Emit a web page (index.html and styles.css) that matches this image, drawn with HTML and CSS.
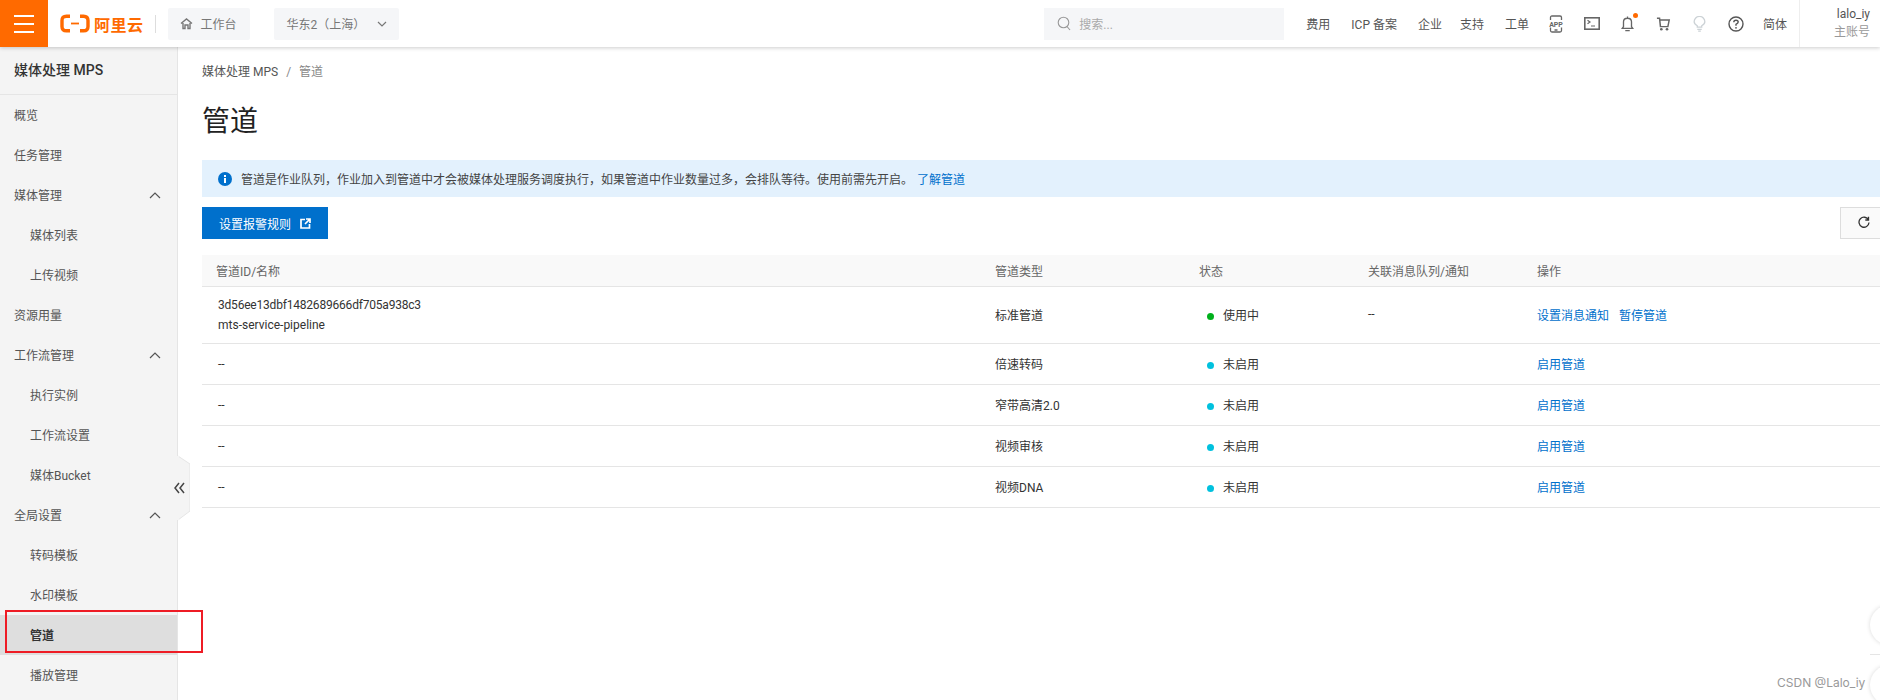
FILE: index.html
```html
<!DOCTYPE html>
<html lang="zh-CN">
<head>
<meta charset="utf-8">
<title>管道 - 媒体处理 MPS</title>
<link rel="stylesheet" href="styles.css">
</head>
<body>

<header class="topbar">
    <div class="burger"><span></span><span></span><span></span></div>
    <div class="logo">
        <svg width="30" height="19" viewBox="0 0 30 19"><path d="M10 2.200H6.500Q2 2.200 2 6.500V12.500Q2 16.800 6.500 16.800H10M20 2.200H23.500Q28 2.200 28 6.500V12.500Q28 16.800 23.500 16.800H20" fill="none" stroke="#ff6a00" stroke-width="3.400"/><path d="M11 9.500H19" stroke="#ff6a00" stroke-width="1.800"/></svg>
        <span class="logoText">阿里云</span>
    </div>
    <div class="logoSep"></div>
    <div class="greyBtn workBtn">
        <svg width="13" height="13" viewBox="0 0 13 13"><path d="M1 6.500L6.500 2L12 6.500M3 6V11.500H5V8H8V11.500H10V6" fill="none" stroke="#777" stroke-width="1.400"/></svg>
        工作台
    </div>
    <div class="greyBtn regionBtn">
        华东2（上海）
        <svg width="10" height="6" viewBox="0 0 10 6"><path d="M1 1L5 5L9 1" fill="none" stroke="#777" stroke-width="1.200"/></svg>
    </div>
    <div class="spacer"></div>
    <div class="search">
        <svg width="14" height="15" viewBox="0 0 14 15"><circle cx="6.500" cy="6.500" r="5.300" fill="none" stroke="#999" stroke-width="1.100"/><path d="M10 10.500L13 14" stroke="#999" stroke-width="1.100"/></svg>
        搜索...
    </div>
    <nav class="topnav">
        <a class="navText wide">费用</a>
        <a class="navText wide">ICP 备案</a>
        <a class="navText">企业</a>
        <a class="navText wide">支持</a>
        <a class="navText">工单</a>
        <a class="navIcon">
            <svg width="18" height="18" viewBox="0 0 18 18"><path d="M3.500 5V2.500Q3.500 1 5 1H13Q14.500 1 14.500 2.500V5M3.500 12.500V15.500Q3.500 17 5 17H13Q14.500 17 14.500 15.500V12.500M7.500 15H10.500" fill="none" stroke="#666" stroke-width="1.300"/><text x="9" y="11.500" class="appText">APP</text></svg>
        </a>
        <a class="navIcon">
            <svg width="16" height="13" viewBox="0 0 16 13"><rect x="0.800" y="0.800" width="14.400" height="11.400" fill="none" stroke="#666" stroke-width="1.600"/><path d="M3.500 3.200L6 5L3.500 6.800M7 9H11" fill="none" stroke="#666" stroke-width="1.200"/></svg>
        </a>
        <a class="navIcon bell">
            <svg width="13" height="16" viewBox="0 0 14 18"><path d="M1 14H13L11.500 12V6.500Q11.500 2.500 7 2.500Q2.500 2.500 2.500 6.500V12ZM7 0.500V2.500M4.500 16.500H9.500" fill="none" stroke="#666" stroke-width="1.500"/></svg>
            <span class="bellDot"></span>
        </a>
        <a class="navIcon">
            <svg width="15" height="14" viewBox="0 0 16 16"><path d="M0.500 1.500H3.500L4.500 11H13L14.500 3.500H4" fill="none" stroke="#666" stroke-width="1.700"/><circle cx="5.500" cy="14" r="1.500" fill="#666"/><circle cx="12" cy="14" r="1.500" fill="#666"/></svg>
        </a>
        <a class="navIcon">
            <svg width="13" height="16" viewBox="0 0 14 18"><path d="M4.500 12.500V11Q1 9 1 6.500A6 6 0 0 1 13 6.500Q13 9 9.500 11V12.500Z" fill="none" stroke="#ccd2d6" stroke-width="1.500"/><path d="M4.500 15H9.500M5.500 17H8.500" stroke="#ccd2d6" stroke-width="1.300"/></svg>
        </a>
        <a class="navIcon">
            <svg width="16" height="16" viewBox="0 0 16 16"><circle cx="8" cy="8" r="7" fill="none" stroke="#555" stroke-width="1.400"/><path d="M5.800 6.200Q5.800 4.200 8 4.200Q10.200 4.200 10.200 6Q10.200 7.200 8 8.300V9.800" fill="none" stroke="#555" stroke-width="1.400"/><circle cx="8" cy="11.800" r="0.900" fill="#555"/></svg>
        </a>
        <a class="navText">简体</a>
    </nav>
    <div class="account">
        <div class="accName">lalo_iy</div>
        <div class="accRole">主账号</div>
    </div>
</header>

<div class="layout">
    <aside class="sidebar">
        <div class="sideTitle">媒体处理 MPS</div>
        <ul class="menu">
            <li class="menuItem">概览</li>
            <li class="menuItem">任务管理</li>
            <li class="menuItem">媒体管理<svg class="caret" width="12" height="7" viewBox="0 0 12 7"><path d="M1 6L6 1L11 6" fill="none" stroke="#555" stroke-width="1.200"/></svg></li>
            <li class="menuItem sub">媒体列表</li>
            <li class="menuItem sub">上传视频</li>
            <li class="menuItem">资源用量</li>
            <li class="menuItem">工作流管理<svg class="caret" width="12" height="7" viewBox="0 0 12 7"><path d="M1 6L6 1L11 6" fill="none" stroke="#555" stroke-width="1.200"/></svg></li>
            <li class="menuItem sub">执行实例</li>
            <li class="menuItem sub">工作流设置</li>
            <li class="menuItem sub">媒体Bucket</li>
            <li class="menuItem">全局设置<svg class="caret" width="12" height="7" viewBox="0 0 12 7"><path d="M1 6L6 1L11 6" fill="none" stroke="#555" stroke-width="1.200"/></svg></li>
            <li class="menuItem sub">转码模板</li>
            <li class="menuItem sub">水印模板</li>
            <li class="menuItem sub active">管道</li>
            <li class="menuItem sub">播放管理</li>
        </ul>
    </aside>

    <svg class="collapseTab" width="24" height="66" viewBox="0 0 24 66">
        <path d="M12 1L24 9V56L12 65" fill="#f4f4f4" stroke="#e5e5e5"/>
        <path d="M12 1V65" stroke="#f4f4f4" stroke-width="2"/>
        <path d="M13 28L9 33L13 38M18 28L14 33L18 38" fill="none" stroke="#444" stroke-width="1.500"/>
    </svg>

    <main class="content">
        <div class="crumbs">媒体处理 MPS<span class="crumbSep">/</span><span class="crumbNow">管道</span></div>
        <h1 class="pageTitle">管道</h1>

        <div class="notice">
            <svg width="14" height="14" viewBox="0 0 14 14"><circle cx="7" cy="7" r="7" fill="#0070cc"/><rect x="6" y="6" width="2" height="5" fill="#fff"/><rect x="6" y="3" width="2" height="2" fill="#fff"/></svg>
            <span>管道是作业队列，作业加入到管道中才会被媒体处理服务调度执行，如果管道中作业数量过多，会排队等待。使用前需先开启。</span>
            <a class="link noticeLink">了解管道</a>
        </div>

        <div class="toolbar">
            <button class="primaryBtn">设置报警规则
                <svg width="11" height="11" viewBox="0 0 11 11"><path d="M5 1.500H1V10H9.500V6M6 1H10V5M10 1L5 6" fill="none" stroke="#fff" stroke-width="1.700"/></svg>
            </button>
            <button class="refreshBtn">
                <svg width="12" height="12" viewBox="0 0 12 12"><path d="M10.500 4A5 5 0 1 0 11 6.500M10.500 0.800V4H7.300" fill="none" stroke="#333" stroke-width="1.300"/></svg>
            </button>
        </div>

        <table class="pipes">
            <colgroup><col class="colName"><col class="colType"><col class="colState"><col class="colQueue"><col class="colOps"></colgroup>
            <thead>
                <tr><th>管道ID/名称</th><th>管道类型</th><th>状态</th><th>关联消息队列/通知</th><th>操作</th></tr>
            </thead>
            <tbody>
                <tr class="tall">
                    <td><div class="pipeId">3d56ee13dbf1482689666df705a938c3</div><div>mts-service-pipeline</div></td>
                    <td>标准管道</td>
                    <td><span class="dot green"></span>使用中</td>
                    <td>--</td>
                    <td><a class="link opLink">设置消息通知</a><a class="link">暂停管道</a></td>
                </tr>
                <tr><td>--</td><td>倍速转码</td><td><span class="dot cyan"></span>未启用</td><td></td><td><a class="link">启用管道</a></td></tr>
                <tr><td>--</td><td>窄带高清2.0</td><td><span class="dot cyan"></span>未启用</td><td></td><td><a class="link">启用管道</a></td></tr>
                <tr><td>--</td><td>视频审核</td><td><span class="dot cyan"></span>未启用</td><td></td><td><a class="link">启用管道</a></td></tr>
                <tr><td>--</td><td>视频DNA</td><td><span class="dot cyan"></span>未启用</td><td></td><td><a class="link">启用管道</a></td></tr>
            </tbody>
        </table>
    </main>
</div>

<div class="redMark"></div>
<div class="floatBall ballTop"></div>
<div class="floatLine"></div>
<div class="floatBall ballBottom"></div>
<div class="watermark">CSDN @Lalo_iy</div>

</body>
</html>
```

FILE: styles.css
```css
html, body
{
    margin: 0;
    height: 700px;
    overflow: hidden;
    background: #fff;
    font-family: Roboto, "Noto Sans CJK SC", sans-serif;
    font-size: 12px;
    color: #333;
}

/* top bar */
.topbar
{
    position: relative;
    z-index: 5;
    display: flex;
    align-items: center;
    height: 47px;
    background: #fff;
    box-shadow: 0 1px 4px rgba(0, 0, 0, 0.2);
}

.burger
{
    display: flex;
    flex-direction: column;
    justify-content: center;
    gap: 6px;
    width: 20px;
    height: 47px;
    padding: 0 14px;
    background: #ff6a00;
}

.burger span
{
    height: 2px;
    background: #fff;
}

.logo
{
    display: flex;
    align-items: center;
    gap: 4px;
    margin-left: 12px;
}

.logoText
{
    font-size: 16px;
    font-weight: 700;
    color: #ff6a00;
    letter-spacing: 0.5px;
}

.logoSep
{
    width: 1px;
    height: 18px;
    margin: 0 12px 0 11px;
    background: #ddd;
}

.greyBtn
{
    display: flex;
    align-items: center;
    height: 32px;
    background: #f5f6f8;
    border-radius: 2px;
    color: #777;
}

.workBtn
{
    gap: 8px;
    width: 70px;
    padding-left: 12px;
}

.regionBtn
{
    justify-content: space-between;
    width: 100px;
    margin-left: 24px;
    padding: 0 12px 0 13px;
}

.spacer
{
    flex: 1;
}

.search
{
    display: flex;
    align-items: center;
    gap: 8px;
    width: 227px;
    height: 32px;
    padding-left: 13px;
    background: #f5f6f8;
    color: #aaa;
}

.topnav
{
    display: flex;
    align-items: center;
    gap: 18px;
    margin-left: 22px;
    color: #555;
}

.navText
{
    white-space: nowrap;
}

.navText.wide
{
    margin-right: 3px;
}

.navIcon
{
    position: relative;
    display: flex;
    align-items: center;
    justify-content: center;
    width: 18px;
}

.appText
{
    font-size: 7px;
    font-weight: 700;
    fill: #666;
    text-anchor: middle;
}

.bellDot
{
    position: absolute;
    top: -3px;
    right: -1px;
    width: 5px;
    height: 5px;
    border-radius: 50%;
    background: #ff6a00;
}

.account
{
    flex: none;
    width: 70px;
    height: 47px;
    margin-left: 12px;
    padding-right: 10px;
    border-left: 1px solid #eee;
    text-align: right;
    line-height: 18px;
}

.accName
{
    margin-top: 5px;
    color: #555;
}

.accRole
{
    color: #999;
}

/* page */
.layout
{
    display: flex;
    position: relative;
    height: 653px;
    overflow: hidden;
}

.sidebar
{
    flex: none;
    width: 177px;
    background: #f4f4f4;
    border-right: 1px solid #e5e5e5;
}

.sideTitle
{
    height: 48px;
    padding-left: 14px;
    line-height: 47px;
    font-size: 14px;
    font-weight: 500;
    color: #333;
    border-bottom: 1px solid #e5e5e5;
    box-sizing: border-box;
}

.menu
{
    margin: 0;
    padding: 0;
    list-style: none;
}

.menuItem
{
    display: flex;
    align-items: center;
    justify-content: space-between;
    height: 38px;
    padding: 0 14px 2px;
    color: #555;
}

.menuItem.sub
{
    padding-left: 30px;
}

.menuItem.active
{
    background: #dedede;
    color: #333;
    font-weight: 700;
}

.caret
{
    margin: 2px 2px 0 0;
}

.collapseTab
{
    position: absolute;
    left: 166px;
    top: 408px;
}

.content
{
    flex: 1;
    min-width: 0;
    padding-left: 24px;
    margin-right: -8px;
}

.crumbs
{
    margin-top: 17px;
    line-height: 16px;
    color: #555;
}

.crumbSep
{
    margin: 0 8px;
    color: #888;
}

.crumbNow
{
    color: #888;
}

.pageTitle
{
    margin: 22px 0 0;
    font-size: 28px;
    font-weight: 400;
    line-height: 40px;
    color: #222;
}

.notice
{
    display: flex;
    align-items: center;
    height: 37px;
    margin-top: 18px;
    padding-left: 16px;
    background: #e3f1fd;
    color: #444;
}

.notice svg
{
    margin-right: 9px;
}

.noticeLink
{
    margin-left: 4px;
}

.link
{
    color: #0070cc;
}

.toolbar
{
    display: flex;
    justify-content: space-between;
    margin-top: 10px;
}

.primaryBtn
{
    display: flex;
    align-items: center;
    gap: 9px;
    width: 126px;
    height: 32px;
    padding: 0 0 0 17px;
    border: 0;
    background: #0070cc;
    color: #fff;
    font: inherit;
}

.refreshBtn
{
    width: 48px;
    height: 32px;
    padding: 0;
    border: 1px solid #ddd;
    background: #fafafa;
}

.pipes
{
    width: 100%;
    margin-top: 16px;
    border-collapse: collapse;
    table-layout: fixed;
}

.colName { width: 779px; }
.colType { width: 204px; }
.colState { width: 169px; }
.colQueue { width: 169px; }

.pipes th
{
    height: 31px;
    padding: 0 14px;
    background: #f9f9f9;
    border-bottom: 1px solid #e5e5e5;
    font-weight: 400;
    text-align: left;
    color: #666;
}

.pipes td
{
    height: 38px;
    padding: 0 14px 2px;
    border-bottom: 1px solid #e5e5e5;
    color: #333;
}

.pipes td:first-child
{
    height: 40px;
    padding: 0 14px 0 16px;
}

.pipes tr.tall td
{
    height: 54px;
}

.pipes tr.tall td:first-child
{
    height: 56px;
}

.pipeId
{
    margin-bottom: 6px;
    letter-spacing: -0.2px;
}

.opLink
{
    margin-right: 10px;
}

.dot
{
    display: inline-block;
    width: 7px;
    height: 7px;
    margin: 0 9px 0 8px;
    border-radius: 50%;
}

.dot.green { background: #00b01c; }
.dot.cyan { background: #00c1de; }

/* things lying over the page */
.redMark
{
    position: absolute;
    z-index: 6;
    left: 5px;
    top: 610px;
    width: 194px;
    height: 39px;
    border: 2px solid #ee1c25;
}

.floatBall
{
    position: absolute;
    left: 1870px;
    width: 40px;
    height: 40px;
    border-radius: 50%;
    background: #fff;
    box-shadow: 0 0 4px rgba(0, 0, 0, 0.15);
}

.ballTop { top: 605px; }
.ballBottom { top: 665px; }

.floatLine
{
    position: absolute;
    left: 1870px;
    top: 654px;
    width: 10px;
    height: 1px;
    background: #e5e5e5;
}

.watermark
{
    position: absolute;
    left: 1777px;
    top: 675px;
    font-family: Inter, "Liberation Sans", sans-serif;
    font-size: 12px;
    color: #999;
}
```
